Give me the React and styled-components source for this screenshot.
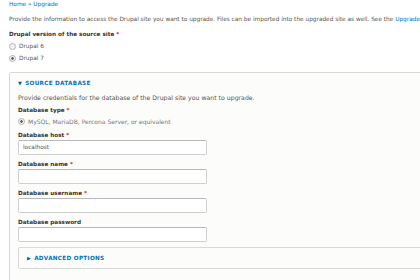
import React from "react";
import styled, { createGlobalStyle } from "styled-components";

const Global = createGlobalStyle`
  html, body { margin: 0; padding: 0; background: #ffffff; overflow: hidden; }
  body { font-family: "DejaVu Sans", Verdana, sans-serif; color: #333; }
`;

const Page = styled.div`
  padding: 0 0 0 9px;
  width: 700px;
`;

const Breadcrumb = styled.div`
  font-size: 5.8px;
  line-height: 8px;
  height: 8px;
  color: #0074bd;
`;

const Text = styled.div`
  font-size: ${(p) => p.$size || 5.8}px;
  line-height: 10px;
  height: 10px;
  margin-top: ${(p) => p.$mt || 0}px;
  color: ${(p) => p.$color || "#555"};
  white-space: nowrap;
`;

const Link = styled.span`
  color: #0074bd;
`;

const Label = styled.div`
  font-size: 5.7px;
  font-weight: bold;
  line-height: 10px;
  height: 10px;
  margin-top: ${(p) => p.$mt || 0}px;
  color: #333;
  white-space: nowrap;
`;

const Star = styled.span`
  color: #e62600;
  margin-left: 2px;
`;

const RadioRow = styled.div`
  display: flex;
  align-items: center;
  gap: 3px;
  height: 10px;
  margin-top: ${(p) => p.$mt || 0}px;
  font-size: ${(p) => p.$size || 5.8}px;
  color: ${(p) => p.$color || "#555"};
  white-space: nowrap;
`;

const RadioDot = styled.span`
  width: 5px;
  height: 5px;
  border-radius: 50%;
  border: 0.5px solid #b4b4b4;
  background: ${(p) => (p.$checked ? "radial-gradient(circle, #666 0 1.2px, #f3f3f3 1.5px)" : "#f3f3f3")};
  flex: none;
`;

const Fieldset = styled.div`
  margin-top: ${(p) => p.$mt || 0}px;
  border: 1px solid #d8d8d4;
  border-radius: 2px;
  background: ${(p) => p.$bg || "#fcfcfa"};
  padding: ${(p) => p.$pad || "5px 8px 40px 8px"};
  box-sizing: border-box;
`;

const Legend = styled.div`
  display: flex;
  align-items: center;
  gap: 3px;
  height: 10px;
  font-size: 5.7px;
  font-weight: bold;
  letter-spacing: 0.05em;
  text-transform: uppercase;
  color: #0074bd;
  white-space: nowrap;
`;

const Arrow = styled.span`
  font-size: 5px;
  font-weight: normal;
  color: #0a5c94;
`;

const Input = styled.div`
  width: 189px;
  height: 15px;
  box-sizing: border-box;
  border: 1px solid #cfcfcf;
  border-top-color: #b8b8b8;
  border-radius: 2px;
  background: #fff;
  font-size: 5.8px;
  color: #555;
  line-height: 13px;
  padding-left: 4px;
`;

export default function App() {
  return (
    <>
      <Global />
      <Page>
        <Breadcrumb>Home » Upgrade</Breadcrumb>
        <Text $mt={6}>
          Provide the information to access the Drupal site you want to upgrade. Files can be imported into the
          upgraded site as well. See the <Link>Upgrade handbook</Link>
        </Text>
        <Label $mt={5}>
          Drupal version of the source site<Star>*</Star>
        </Label>
        <RadioRow $mt={2}>
          <RadioDot />
          Drupal 6
        </RadioRow>
        <RadioRow $mt={2}>
          <RadioDot $checked />
          Drupal 7
        </RadioRow>
        <Fieldset $mt={9}>
          <Legend>
            <Arrow>▼</Arrow>Source database
          </Legend>
          <Text $mt={5} $size={6.2}>
            Provide credentials for the database of the Drupal site you want to upgrade.
          </Text>
          <Label $mt={2}>
            Database type<Star>*</Star>
          </Label>
          <RadioRow $mt={1} $color="#777" $size={6}>
            <RadioDot $checked />
            MySQL, MariaDB, Percona Server, or equivalent
          </RadioRow>
          <Label $mt={4}>
            Database host<Star>*</Star>
          </Label>
          <Input>localhost</Input>
          <Label $mt={4}>
            Database name<Star>*</Star>
          </Label>
          <Input />
          <Label $mt={4}>
            Database username<Star>*</Star>
          </Label>
          <Input />
          <Label $mt={4}>Database password</Label>
          <Input />
          <Fieldset $mt={5} $bg="#fcfcfa" $pad="5px 8px">
            <Legend>
              <Arrow>▶</Arrow>Advanced options
            </Legend>
          </Fieldset>
        </Fieldset>
      </Page>
    </>
  );
}
